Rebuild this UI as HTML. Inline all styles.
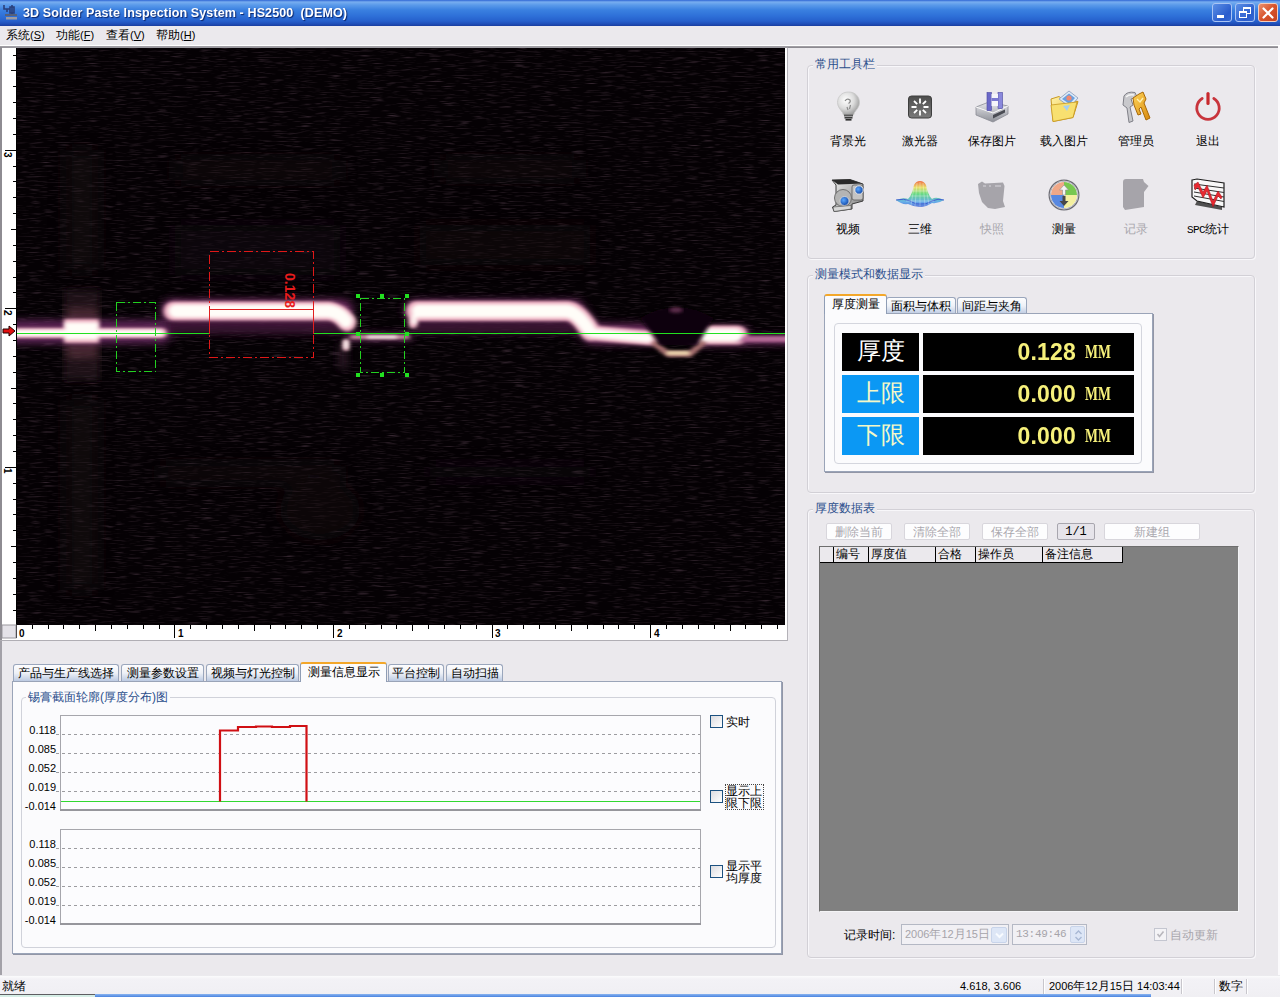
<!DOCTYPE html>
<html>
<head>
<meta charset="utf-8">
<title>3D Solder Paste Inspection System</title>
<style>
*{box-sizing:border-box;margin:0;padding:0}
html,body{width:1280px;height:997px;overflow:hidden}
body{position:relative;background:#ebe9ed;font-family:"Liberation Sans",sans-serif;font-size:12px;color:#000;line-height:1}
.abs{position:absolute}
/* title bar */
#title{left:0;top:0;width:1280px;height:26px;background:linear-gradient(180deg,#2f66d4 0,#78aef0 2px,#5a9aea 5px,#3a80e0 10px,#2e70d8 16px,#2660cc 21px,#1f4eb8 24px,#193d9e 26px)}
#title .txt{left:23px;top:6px;transform:scaleX(0.965);transform-origin:0 0;color:#fff;font-weight:bold;font-size:13px;letter-spacing:0.1px;text-shadow:1px 1px 1px #0a246a;white-space:nowrap}
.tb{top:3px;width:20px;height:19px;border-radius:3px;border:1px solid #a9c4f4;background:linear-gradient(135deg,#5b8fe6,#2a5ccc 70%,#3468d4)}
.tb.close{background:linear-gradient(135deg,#e9916f,#d8532b 50%,#c5421f);border-color:#f4cdbd}
/* menu */
#menu{left:0;top:26px;width:1280px;height:19px;background:#ebe9ed}
#menu span{position:absolute;top:3px;font-size:12px;white-space:nowrap}
#menu span i{font-style:normal;font-size:11px}
/* group box */
.gb{border:1px solid #d2d0d6;border-radius:4px;box-shadow:inset 1px 1px 0 #f8f7fa,1px 1px 0 #f8f7fa}
.gbt{color:#2b4f8c;font-size:12px;background:#ebe9ed;padding:0 2px;white-space:nowrap}
.t12{font-size:12px;white-space:nowrap}
</style>
</head>
<body>
<!-- TITLE BAR -->
<div id="title" class="abs">
  <svg class="abs" style="left:3px;top:4px" width="16" height="17" viewBox="0 0 16 17">
    <path d="M1 1v4h3v3M4 5h3M9 1v9M7 3h4v6h-4z" fill="none" stroke="#2a3f7a" stroke-width="1.6"/>
    <rect x="2" y="10" width="12" height="2" fill="#55607a"/><rect x="3" y="13" width="11" height="2.5" fill="#9a9aa4"/>
  </svg>
  <div class="abs txt">3D Solder Paste Inspection System - HS2500&nbsp; (DEMO)</div>
  <div class="abs tb" style="left:1212px"><div class="abs" style="left:4px;top:11px;width:7px;height:3px;background:#fff"></div></div>
  <div class="abs tb" style="left:1235px">
    <div class="abs" style="left:7px;top:3px;width:8px;height:7px;border:1px solid #fff;border-top-width:2px"></div>
    <div class="abs" style="left:3px;top:7px;width:8px;height:7px;border:1px solid #fff;border-top-width:2px;background:#3a6cd6"></div>
  </div>
  <div class="abs tb close" style="left:1258px">
    <svg class="abs" style="left:3px;top:3px" width="12" height="12" viewBox="0 0 12 12"><path d="M1.5 1.5l9 9M10.5 1.5l-9 9" stroke="#fff" stroke-width="2.2" stroke-linecap="round"/></svg>
  </div>
</div>
<!-- MENU -->
<div id="menu" class="abs">
  <span style="left:6px">系统<i>(<u>S</u>)</i></span>
  <span style="left:56px">功能<i>(<u>F</u>)</i></span>
  <span style="left:106px">查看<i>(<u>V</u>)</i></span>
  <span style="left:156px">帮助<i>(<u>H</u>)</i></span>
</div>
<div class="abs" style="left:0;top:45px;width:1280px;height:1px;background:#fff"></div>
<div class="abs" style="left:0;top:46px;width:1278px;height:1px;background:#a09ea4"></div>
<div class="abs" style="left:788px;top:47px;width:490px;height:1px;background:#8c8a90"></div>
<div class="abs" style="left:1278px;top:46px;width:2px;height:930px;background:#fbfafc"></div>

<div class="abs" style="left:0;top:641px;width:2px;height:334px;background:#a3a1a8"></div>
<!-- CAMERA VIEW -->
<div id="cam" class="abs" style="left:0;top:47px;width:788px;height:594px;background:#fff;border-left:2px solid #9a989e;border-top:1px solid #9a989e"></div>
<svg class="abs" style="left:0;top:47px" width="788" height="594" viewBox="0 47 788 594">
  <defs>
    <filter id="b1" x="-5%" y="-200%" width="110%" height="500%"><feGaussianBlur stdDeviation="2.2 1.6"/></filter>
    <filter id="b2" x="-5%" y="-300%" width="110%" height="700%"><feGaussianBlur stdDeviation="4 3.5"/></filter>
    <filter id="b3" x="-20%" y="-20%" width="140%" height="140%"><feGaussianBlur stdDeviation="9"/></filter>
    <filter id="nz" x="0" y="0" width="100%" height="100%">
      <feTurbulence type="fractalNoise" baseFrequency="0.07 0.8" numOctaves="2" seed="4"/>
      <feColorMatrix type="matrix" values="0 0 0 0 0.11  0 0 0 0 0.06  0 0 0 0 0.09  0.9 0.9 0 0 -0.93"/>
    </filter>
    <clipPath id="cc"><rect x="16" y="48" width="769" height="577"/></clipPath>
  </defs>
  <!-- white ruler backgrounds -->
  <rect x="2" y="48" width="786" height="593" fill="#fff"/>
  <rect x="16" y="48" width="769" height="577" fill="#050104"/>
  <g clip-path="url(#cc)">
    <rect x="16" y="48" width="769" height="577" filter="url(#nz)"/>
    <!-- faint haze -->
    <g filter="url(#b3)" opacity="0.45">
      <rect x="66" y="150" width="32" height="120" fill="#1e1816"/>
      <rect x="66" y="400" width="32" height="190" fill="#1a1412"/>
      <rect x="175" y="160" width="165" height="20" fill="#1c1618"/>
      <rect x="175" y="225" width="165" height="50" fill="#151012"/>
      <rect x="160" y="465" width="180" height="16" fill="#1a1216"/>
      <ellipse cx="320" cy="510" rx="40" ry="30" fill="#120c10"/>
      <rect x="440" y="160" width="140" height="18" fill="#1a1216"/>
      <rect x="420" y="225" width="170" height="40" fill="#120c10"/>
      <rect x="430" y="465" width="160" height="14" fill="#160f14"/>
    </g>
    <!-- vertical streak at x~80 -->
    <g filter="url(#b2)">
      <rect x="64" y="290" width="36" height="90" fill="#3a2028" opacity="0.5"/>
      <rect x="66" y="308" width="32" height="50" fill="#6a3c48" opacity="0.5"/>
    </g>
    <!-- purple outer glow -->
    <g filter="url(#b2)" fill="none" stroke="#6e2a60" stroke-linecap="round" stroke-linejoin="round" opacity="0.9">
      <path d="M10 332H160" stroke-width="24" stroke="#62285a"/>
      <path d="M172 310H342" stroke-width="22"/>
      <path d="M172 328H346" stroke-width="12" stroke="#3e1636"/>
      <path d="M350 337H408" stroke-width="7"/>
      <path d="M415 310H574L592 334H652" stroke-width="21"/>
      <path d="M418 328H580" stroke-width="12" stroke="#3e1636"/>
      <path d="M700 336H740" stroke-width="20"/>
      <path d="M738 340H790" stroke-width="9"/>
      <path d="M343 345v22" stroke-width="5" stroke="#4a2a40"/>
    </g>
    <!-- pink mid glow -->
    <g filter="url(#b1)" fill="none" stroke="#f0b4c4" stroke-linecap="round" stroke-linejoin="round">
      <path d="M10 333H162" stroke-width="10"/>
      <path d="M64 331H99" stroke-width="24" stroke-linecap="butt"/>
      <path d="M173 311H330Q340 313 347 322" stroke-width="19"/>
      <path d="M352 337H408" stroke-width="4" stroke="#c890a0"/>
      <path d="M346 342v6" stroke-width="6"/>
      <path d="M416 311H568Q578 312 590 331" stroke-width="20"/>
      <path d="M413 316v8" stroke-width="9"/>
      <path d="M592 333L652 338" stroke-width="15"/>
      <path d="M702 335H738" stroke-width="19"/>
      <path d="M738 339H790" stroke-width="6" stroke="#b86a98"/>
      <path d="M654 343L668 354H690L704 342" stroke-width="6" stroke="#a87070"/>
    </g>
    <!-- white core -->
    <g filter="url(#b1)" fill="none" stroke="#fffdf8" stroke-linecap="round" stroke-linejoin="round">
      <path d="M10 333H160" stroke-width="6"/>
      <path d="M65 331H98" stroke-width="17" stroke-linecap="butt"/>
      <path d="M175 311H329Q339 312 346 321" stroke-width="13"/>
      <path d="M368 337H396" stroke-width="2.500"/>
      <path d="M346 342v5" stroke-width="4"/>
      <path d="M418 311H567Q577 312 589 330" stroke-width="13"/>
      <path d="M414 316v6" stroke-width="5"/>
      <path d="M592 333L648 338" stroke-width="9"/>
      <path d="M706 335H736" stroke-width="13"/>
      <path d="M668 353H688" stroke-width="4" stroke="#f0dcb0"/>
    </g>
    <!-- dark V dip -->
    <path d="M640 318Q676 296 714 318L697 345H660Z" fill="#0a0408" filter="url(#b1)"/>
    <ellipse cx="676" cy="310" rx="7" ry="3" fill="#5a2a48" filter="url(#b1)"/>
  </g>
  <!-- overlays -->
  <g fill="none" shape-rendering="crispEdges">
    <path d="M16 333.500H209M313 333.500H785" stroke="#22e020" stroke-width="1.4"/>
    <rect x="116.500" y="302.500" width="39" height="69" stroke="#22d020" stroke-width="1" stroke-dasharray="8 3 2 3"/>
    <rect x="360.500" y="298.500" width="44" height="74" stroke="#22d020" stroke-width="1" stroke-dasharray="8 3 2 3"/>
    <rect x="209.500" y="251.500" width="104" height="106" stroke="#e01818" stroke-width="1" stroke-dasharray="9 3 2 3"/>
    <path d="M209.500 309.500H313.500M209.500 309V334M313.500 309V334" stroke="#e02020" stroke-width="1"/>
  </g>
  <g fill="#22e020">
    <rect x="356" y="294" width="4" height="4"/><rect x="380" y="294" width="4" height="4"/><rect x="405" y="294" width="4" height="4"/>
    <rect x="356" y="332" width="4" height="4"/><rect x="405" y="332" width="4" height="4"/>
    <rect x="356" y="373" width="4" height="4"/><rect x="380" y="373" width="4" height="4"/><rect x="405" y="373" width="4" height="4"/>
  </g>
  <text transform="translate(284.500 273) rotate(90)" font-family="Liberation Sans, sans-serif" font-weight="bold" font-size="14" fill="#e81c1c">0.128</text>
  <!-- rulers -->
  <g stroke="#000" stroke-width="1" shape-rendering="crispEdges">
    <path id="vt" d="M13 610.5H16M13 594.5H16M13 578.5H16M13 562.5H16M11 546.5H16M13 530.5H16M13 514.5H16M13 499.5H16M13 483.5H16M5 467.5H16M13 451.5H16M13 435.5H16M13 419.5H16M13 403.5H16M11 388.5H16M13 372.5H16M13 356.5H16M13 340.5H16M13 324.5H16M5 308.5H16M13 292.5H16M13 277.5H16M13 261.5H16M13 245.5H16M11 229.5H16M13 213.5H16M13 197.5H16M13 181.5H16M13 166.5H16M5 150.5H16M13 134.5H16M13 118.5H16M13 102.5H16M13 86.5H16M11 70.5H16M13 55.5H16M16.500 48V625"/>
    <path id="ht" d="M16.5 624.500v13M32.5 624.500v4M48.5 624.500v4M63.5 624.500v4M79.5 624.500v4M95.5 624.500v6M111.5 624.500v4M127.5 624.500v4M143.5 624.500v4M159.5 624.500v4M174.5 624.500v13M190.5 624.500v4M206.5 624.500v4M222.5 624.500v4M238.5 624.500v4M254.5 624.500v6M270.5 624.500v4M285.5 624.500v4M301.5 624.500v4M317.5 624.500v4M333.5 624.500v13M349.5 624.500v4M365.5 624.500v4M381.5 624.500v4M396.5 624.500v4M412.5 624.500v6M428.5 624.500v4M444.5 624.500v4M460.5 624.500v4M476.5 624.500v4M492.5 624.500v13M507.5 624.500v4M523.5 624.500v4M539.5 624.500v4M555.5 624.500v4M571.5 624.500v6M587.5 624.500v4M603.5 624.500v4M618.5 624.500v4M634.5 624.500v4M650.5 624.500v13M666.5 624.500v4M682.5 624.500v4M698.5 624.500v4M714.5 624.500v4M730.5 624.500v6M745.5 624.500v4M761.5 624.500v4M777.5 624.500v4"/>
  </g>
  <g font-family="Liberation Sans, sans-serif" font-size="10" font-weight="bold" fill="#000">
    <text x="19" y="637">0</text><text x="178" y="637">1</text><text x="337" y="637">2</text><text x="495" y="637">3</text><text x="654" y="637">4</text>
    <text transform="translate(4 152) rotate(90)">3</text>
    <text transform="translate(4 310) rotate(90)">2</text>
    <text transform="translate(4 468) rotate(90)">1</text>
  </g>
  <path d="M3 329h6v-3l6 5l-6 5v-3h-6z" fill="#e01010" stroke="#200" stroke-width="1"/>
  <!-- corner box -->
  <rect x="2" y="625" width="14" height="13" fill="#e4e2e8" stroke="#9a989e" stroke-width="1"/>
  <!-- frame -->
  <path d="M0 47.500H788" stroke="#9a989e" stroke-width="1"/>
  <path d="M1 47V641" stroke="#8e8c92" stroke-width="2"/>
  <path d="M0 640.500H788" stroke="#b0aeb4" stroke-width="1"/>
  <path d="M787.500 48V641" stroke="#b4b2b8" stroke-width="1"/>
</svg>


<style>
.ico{position:absolute;width:36px;height:36px}
.il{position:absolute;font-size:12px;white-space:nowrap;text-align:center;width:72px}
.dis{color:#a8a6ac}
.tab{position:absolute;height:17px;border:1px solid #9aa6bc;border-bottom:none;border-radius:3px 3px 0 0;background:linear-gradient(180deg,#fdfdfe 0,#eef1f7 50%,#bccae2 100%);font-size:12px;white-space:nowrap;text-align:center;padding-top:2px}
.tab.act{background:#fbfbfd;border-color:#8f9db5;border-top:2px solid #f3a72a;z-index:3;padding-top:2px}
.pane{position:absolute;background:#fbfbfd;border:1px solid #9aa4b8;box-shadow:1px 1px 0 #9296a6}
.lcd{position:absolute;background:#000;height:38px}
.lcdl{position:absolute;height:38px;color:#fff;font-family:"Liberation Serif",serif;font-size:24px;text-align:center;line-height:37px;width:77px}
.num{position:absolute;right:58px;top:8px;font-size:23px;transform:scaleY(1.04);font-weight:bold;color:#f6f07a;letter-spacing:0.2px}
.mm{position:absolute;left:162px;top:9px;font-family:"Liberation Serif",serif;font-weight:bold;font-size:19px;color:#f6f07a;transform:scaleX(0.72);transform-origin:0 0}
.btn{position:absolute;top:523px;height:17px;background:#fdfdfe;border:1px solid #d8d6dc;border-radius:2px;color:#aaa8ae;font-size:12px;text-align:center;padding-top:2px;white-space:nowrap}
.hc{position:absolute;top:547px;height:16px;background:#ebe9ed;border-right:1px solid #000;border-bottom:1px solid #000;font-size:12px;white-space:nowrap;padding:1px 0 0 2px;overflow:hidden}
</style>
<!-- GROUP 1: toolbar -->
<div class="abs gb" style="left:807px;top:65px;width:448px;height:194px"></div>
<div class="abs gbt" style="left:813px;top:58px">常用工具栏</div>
<!-- GROUP 2 -->
<div class="abs gb" style="left:807px;top:275px;width:448px;height:218px"></div>
<div class="abs gbt" style="left:813px;top:268px">测量模式和数据显示</div>
<div class="tab act" style="left:824px;top:294px;width:63px;height:20px">厚度测量</div>
<div class="tab" style="left:886px;top:297px;width:70px">面积与体积</div>
<div class="tab" style="left:957px;top:297px;width:70px">间距与夹角</div>
<div class="pane" style="left:824px;top:313px;width:329px;height:159px"></div>
<div class="abs" style="left:834px;top:323px;width:308px;height:141px;border:1px solid #d4d6de;border-radius:4px;z-index:4"></div>
<div style="position:absolute;left:0;top:0;z-index:5">
<div class="lcdl" style="left:842px;top:333px;background:#000">厚度</div>
<div class="lcdl" style="left:842px;top:375px;background:#0b98f4;color:#f4f8c8">上限</div>
<div class="lcdl" style="left:842px;top:417px;background:#0b98f4;color:#f4f8c8">下限</div>
<div class="lcd" style="left:923px;top:333px;width:211px"><span class="num">0.128</span><span class="mm">MM</span></div>
<div class="lcd" style="left:923px;top:375px;width:211px"><span class="num">0.000</span><span class="mm">MM</span></div>
<div class="lcd" style="left:923px;top:417px;width:211px"><span class="num">0.000</span><span class="mm">MM</span></div>
</div>
<!-- GROUP 3 -->
<div class="abs gb" style="left:807px;top:509px;width:448px;height:449px"></div>
<div class="abs gbt" style="left:813px;top:502px">厚度数据表</div>
<div class="btn" style="left:826px;width:66px">删除当前</div>
<div class="btn" style="left:904px;width:66px">清除全部</div>
<div class="btn" style="left:982px;width:66px">保存全部</div>
<div class="btn" style="left:1057px;width:38px;background:#e6e4ea;border-color:#a8a6ae;color:#000;font-family:'Liberation Mono',monospace">1/1</div>
<div class="btn" style="left:1104px;width:96px">新建组</div>
<div class="abs" style="left:819px;top:546px;width:420px;height:366px;background:#808080;border-top:1px solid #6e6e6e;border-left:1px solid #6e6e6e;border-right:1px solid #f4f4f6;border-bottom:1px solid #f4f4f6"></div>
<div class="hc" style="left:820px;width:14px"></div>
<div class="hc" style="left:834px;width:35px">编号</div>
<div class="hc" style="left:869px;width:67px">厚度值</div>
<div class="hc" style="left:936px;width:40px">合格</div>
<div class="hc" style="left:976px;width:67px">操作员</div>
<div class="hc" style="left:1043px;width:80px">备注信息</div>
<!-- date row -->
<div class="abs t12" style="left:844px;top:929px">记录时间:</div>
<div class="abs" style="left:901px;top:924px;width:108px;height:21px;background:#f1f0f4;border:1px solid #b4b8c4"><span class="abs t12" style="left:3px;top:3px;color:#a6a4aa"><i style="font-style:normal;font-size:11px">2006</i>年<i style="font-style:normal;font-size:11px">12</i>月<i style="font-style:normal;font-size:11px">15</i>日</span>
  <div class="abs" style="left:89px;top:2px;width:16px;height:16px;border-radius:2px;background:#dde6f6;border:1px solid #c8d4ea"><svg class="abs" style="left:3px;top:4px" width="9" height="7"><path d="M1 1.500l3.500 3.500l3.500-3.500" fill="none" stroke="#f8fbff" stroke-width="2"/></svg></div></div>
<div class="abs" style="left:1012px;top:924px;width:75px;height:21px;background:#f1f0f4;border:1px solid #b4b8c4"><span class="abs" style="left:3px;top:4px;color:#a6a4aa;font-family:'Liberation Mono',monospace;font-size:11px;letter-spacing:-0.3px;white-space:nowrap">13:49:46</span>
  <div class="abs" style="left:57px;top:1px;width:15px;height:17px;border-radius:2px;background:#dde6f6;border:1px solid #c8d4ea"><svg class="abs" style="left:3px;top:2px" width="9" height="13"><path d="M1.500 5l3-3l3 3M1.500 8l3 3l3-3" fill="none" stroke="#a8b8d4" stroke-width="1.4"/></svg></div></div>
<div class="abs" style="left:1154px;top:928px;width:13px;height:13px;background:#f4f3f6;border:1px solid #c4c6d0"><svg class="abs" style="left:1px;top:1px" width="9" height="9"><path d="M1.500 4l2 2.500l4-5" fill="none" stroke="#b8b6bc" stroke-width="1.6"/></svg></div>
<div class="abs t12 dis" style="left:1170px;top:929px">自动更新</div>

<svg width="0" height="0" style="position:absolute"><defs>
<radialGradient id="gBulb" cx="0.38" cy="0.35" r="0.75"><stop offset="0" stop-color="#ffffff"/><stop offset="0.5" stop-color="#dcdcdc"/><stop offset="1" stop-color="#8c8c8c"/></radialGradient>
<linearGradient id="gLas" x1="0" y1="0" x2="0" y2="1"><stop offset="0" stop-color="#4c4c4c"/><stop offset="1" stop-color="#7a7a7a"/></linearGradient>
<linearGradient id="gFold" x1="0" y1="0" x2="1" y2="1"><stop offset="0" stop-color="#fff3a8"/><stop offset="1" stop-color="#e8b838"/></linearGradient>
<linearGradient id="gDrv" x1="0" y1="0" x2="0" y2="1"><stop offset="0" stop-color="#e8e8ec"/><stop offset="1" stop-color="#8e9098"/></linearGradient>
<linearGradient id="gKey" x1="0" y1="0" x2="1" y2="1"><stop offset="0" stop-color="#ffd458"/><stop offset="1" stop-color="#d88a10"/></linearGradient>
<linearGradient id="gCam" x1="0" y1="0" x2="1" y2="1"><stop offset="0" stop-color="#f0f0f0"/><stop offset="1" stop-color="#7c7c7c"/></linearGradient>
<radialGradient id="gLens" cx="0.4" cy="0.4" r="0.7"><stop offset="0" stop-color="#5aa8ff"/><stop offset="1" stop-color="#0a3c9c"/></radialGradient>
<linearGradient id="g3d" x1="0" y1="0" x2="0" y2="1"><stop offset="0" stop-color="#f06030"/><stop offset="0.25" stop-color="#e8e060"/><stop offset="0.5" stop-color="#58d878"/><stop offset="0.8" stop-color="#58a8e8"/><stop offset="1" stop-color="#4868d8"/></linearGradient>
</defs></svg>
<!-- 1 bulb -->
<svg class="ico" style="left:830px;top:88px" viewBox="0 0 36 36">
  <path d="M18.500 4C11.500 4 7.500 9 7.500 14.500C7.500 19 10.500 21.500 12.500 24.500L13.500 27H23.500L24.500 24.500C26.500 21.500 29.500 19 29.500 14.500C29.500 9 25.500 4 18.500 4Z" fill="url(#gBulb)" stroke="#c8c8c8" stroke-width="0.8"/>
  <path d="M15 13q2-3 5-1q1 2-1.500 3.500M17 19l1 3M20.500 17l-1 4" fill="none" stroke="#8a8a8a" stroke-width="1.2"/>
  <rect x="14" y="26.500" width="9" height="2" fill="#5a5a5a"/><rect x="14.500" y="29" width="8" height="1.600" fill="#3c3c3c"/><rect x="15.500" y="31" width="6" height="1.600" fill="#2c2c2c"/>
</svg>
<!-- 2 laser -->
<svg class="ico" style="left:901px;top:88px" viewBox="0 0 36 36">
  <rect x="7.500" y="8" width="23" height="22" rx="3" fill="url(#gLas)" stroke="#3e3e3e" stroke-width="1"/>
  <g stroke="#fff" stroke-width="1.800" stroke-linecap="butt"><path d="M19 10.500v5M19 22.500v5M10.500 19h5M22.500 19h5M13 13l3.200 3.200M25 13l-3.200 3.200M13 25l3.200-3.200M25 25l-3.200-3.200"/></g>
</svg>
<!-- 3 save -->
<svg class="ico" style="left:973px;top:88px" viewBox="0 0 36 36">
  <path d="M3 19L16 14L35 18V26L20 34L3 27Z" fill="url(#gDrv)" stroke="#8a8c94" stroke-width="0.8"/>
  <path d="M3 19L20 25L35 18" fill="none" stroke="#fafafa" stroke-width="1"/>
  <path d="M20 27l12-5.500v3L20 30.500Z" fill="#4a4c54"/>
  <rect x="14" y="4.500" width="4.500" height="18" fill="#6a68c8" stroke="#4a48a0" stroke-width="0.6"/>
  <rect x="25" y="4.500" width="4.500" height="16" fill="#8a88dc" stroke="#4a48a0" stroke-width="0.6"/>
  <rect x="18.500" y="6" width="6.500" height="12" fill="#f4f4fa"/>
  <rect x="18.500" y="10" width="6.500" height="3" fill="#7a78d0"/>
</svg>
<!-- 4 folder -->
<svg class="ico" style="left:1045px;top:88px" viewBox="0 0 36 36">
  <path d="M6 11L14 8.500L17 11L33 13.500L28 29.500L8 33.500Z" fill="url(#gFold)" stroke="#c89820" stroke-width="1"/>
  <path d="M14 11L24 3L33 10L25 19Z" fill="#dceaf8" stroke="#8898b8" stroke-width="0.8"/>
  <path d="M17 11L24 5.500L30 10L24.500 16Z" fill="#6aa0e0"/>
  <circle cx="24" cy="10" r="2.600" fill="#f08870"/>
  <path d="M6 17L32 14L28 29.500L8 33.500Z" fill="#f8e070" stroke="#c89820" stroke-width="0.8"/>
  <path d="M18 18l7-1l-3 6z" fill="#a8d0f0"/>
</svg>
<!-- 5 keys -->
<svg class="ico" style="left:1117px;top:88px" viewBox="0 0 36 36">
  <path d="M7 8Q10 3 18 4.500L20 9L14 11L16 17L13 19L16 33L12 34.500L10 20L6 17Z" fill="#c8c8cc" stroke="#808088" stroke-width="1"/>
  <path d="M9 9Q12 6 17 7" fill="none" stroke="#f4f4f4" stroke-width="1.5"/>
  <path d="M16 10L22 6L26 4L29 11L27 15L33 30L29 32L24 19L22 21L24 26L21 27L17 17Z" fill="url(#gKey)" stroke="#a86808" stroke-width="1"/>
  <path d="M20 11l3 3l3-4" fill="none" stroke="#fff0b0" stroke-width="1.400"/>
</svg>
<!-- 6 power -->
<svg class="ico" style="left:1189px;top:88px" viewBox="0 0 36 36">
  <path d="M13.200 10.500A11.200 11.200 0 1 0 24.800 10.500" fill="none" stroke="#c8343c" stroke-width="2.800" stroke-linecap="round"/>
  <path d="M19 5.500V15.500" stroke="#c8282c" stroke-width="3.200" stroke-linecap="round"/>
</svg>
<!-- 7 video -->
<svg class="ico" style="left:830px;top:177px" viewBox="0 0 36 36">
  <path d="M2 3L20 2.500L33 7V24L22 27V32L4 34.500L2.500 30L6 28V8Z" fill="url(#gCam)" stroke="#3c3c3c" stroke-width="1"/>
  <path d="M2 3L20 2.500L32 6.500L8 7.500Z" fill="#2a2a2a"/>
  <rect x="22" y="8" width="11" height="15" rx="2" fill="#c4c4c4" stroke="#5a5a5a" stroke-width="0.8"/>
  <circle cx="29" cy="13" r="4.200" fill="url(#gLens)" stroke="#e8e8e8" stroke-width="1"/>
  <circle cx="13" cy="21" r="8.500" fill="#b4b4b4" stroke="#707070" stroke-width="1"/>
  <circle cx="14.500" cy="24" r="4.500" fill="url(#gLens)" stroke="#e0e0e0" stroke-width="0.8"/>
  <path d="M3 30L21 28.500V32L4 34.500Z" fill="#d8d8d8" stroke="#505050" stroke-width="0.6"/>
</svg>
<!-- 8 3D -->
<svg class="abs" style="left:892px;top:177px" width="56" height="36" viewBox="0 0 56 36">
  <path d="M4 23Q12 20 16 22Q20 18 22 8Q24 4 28 4Q32 4 34 8Q36 18 40 22Q44 19 52 23Q46 27 40 26Q34 30 28 30Q22 30 16 27Q10 28 4 23Z" fill="url(#g3d)" opacity="0.9"/>
  <path d="M4 23Q12 21 18 24Q24 28 28 27Q34 28 40 24Q46 21 52 23" fill="none" stroke="#4060d0" stroke-width="1"/>
  <g stroke="#ffffff" stroke-width="0.5" opacity="0.6"><path d="M22 10l-3 18M25 6l-2 23M28 5v25M31 6l2 23M34 10l3 18M20 14h16M18 19h20M14 24h28"/></g>
</svg>
<!-- 9 snapshot (disabled) -->
<svg class="ico" style="left:973px;top:177px" viewBox="0 0 36 36">
  <path d="M5 7L9 4.500L12 6.500L30 5.500L31.500 9L30 24L32 30L22 32L15 31L9 25L6 16Z" fill="#a6a4aa"/>
  <path d="M10 9h3M16 9h2M22 9h6" stroke="#d8d6dc" stroke-width="1.200"/>
</svg>
<!-- 10 measure -->
<svg class="ico" style="left:1045px;top:177px" viewBox="0 0 36 36">
  <circle cx="19" cy="18" r="14.500" fill="#f4f4f4" stroke="#6c6c74" stroke-width="2"/>
  <path d="M19 18V5A13 13 0 0 0 6 18Z" fill="#f0a888"/>
  <path d="M19 18H32A13 13 0 0 0 19 5Z" fill="#78c850"/>
  <path d="M19 18V31A13 13 0 0 0 32 18Z" fill="#f4f0a0"/>
  <path d="M19 18H6A13 13 0 0 0 19 31Z" fill="#5888e0"/>
  <circle cx="19" cy="18" r="14" fill="none" stroke="#c8c8d0" stroke-width="1"/>
  <path d="M19 8l-4.500 5h3v5h3v-5h3z" fill="#f4f4f4" stroke="#909090" stroke-width="0.6"/>
  <path d="M19 29l-4.500-5h3v-5h3v5h3z" fill="#484848"/>
</svg>
<!-- 11 record (disabled) -->
<svg class="ico" style="left:1117px;top:177px" viewBox="0 0 36 36">
  <path d="M6 5Q6 2 9 2H26L27 5L31.500 9L27 15V30L8 33L6 30Z" fill="#a6a4aa"/>
</svg>
<!-- 12 SPC -->
<svg class="ico" style="left:1189px;top:177px" viewBox="0 0 36 36">
  <path d="M6 28L33 33V30L8 24Z" fill="#505050"/>
  <path d="M3 3L8 2L35 6V30L8 24L3 20Z" fill="#f8f8f8" stroke="#202020" stroke-width="1.200"/>
  <g stroke="#303030" stroke-width="1"><path d="M5 7L35 11M5 11L35 15.500M5 15L35 20M5 19L35 24.500"/></g>
  <path d="M5 8L9 5L14 15L18 8L24 24L29 14L33 20L32 22L29 19L24 30L18 14L14 21L9 10L6 13Z" fill="#e82830" stroke="#a01018" stroke-width="0.5"/>
</svg>
<!-- labels -->
<div class="il" style="left:812px;top:135px">背景光</div>
<div class="il" style="left:884px;top:135px">激光器</div>
<div class="il" style="left:956px;top:135px">保存图片</div>
<div class="il" style="left:1028px;top:135px">载入图片</div>
<div class="il" style="left:1100px;top:135px">管理员</div>
<div class="il" style="left:1172px;top:135px">退出</div>
<div class="il" style="left:812px;top:223px">视频</div>
<div class="il" style="left:884px;top:223px">三维</div>
<div class="il dis" style="left:956px;top:223px">快照</div>
<div class="il" style="left:1028px;top:223px">测量</div>
<div class="il dis" style="left:1100px;top:223px">记录</div>
<div class="il" style="left:1172px;top:223px"><span style="font-family:'Liberation Mono',monospace;font-size:11px;letter-spacing:-0.6px">SPC</span>统计</div>


<style>
.cb{position:absolute;width:13px;height:13px;background:linear-gradient(135deg,#dcdce0,#fff);border:1px solid #1c5180}
.yl{position:absolute;left:18px;width:38px;text-align:right;font-size:11px;white-space:nowrap;padding-top:1px}
.sbs{position:absolute;top:979px;width:1px;height:15px;background:#c8c6cc;border-right:1px solid #fff;box-sizing:content-box}
</style>
<!-- BOTTOM TABS -->
<div class="tab" style="left:13px;top:664px;width:106px">产品与生产线选择</div>
<div class="tab" style="left:121px;top:664px;width:83px">测量参数设置</div>
<div class="tab" style="left:206px;top:664px;width:93px">视频与灯光控制</div>
<div class="tab act" style="left:300px;top:662px;width:87px;height:20px">测量信息显示</div>
<div class="tab" style="left:388px;top:664px;width:56px">平台控制</div>
<div class="tab" style="left:446px;top:664px;width:57px">自动扫描</div>
<div class="pane" style="left:12px;top:681px;width:770px;height:273px"></div>
<div class="abs" style="left:21px;top:697px;width:755px;height:251px;border:1px solid #d0d2da;border-radius:4px;z-index:4"></div>
<div class="abs t12" style="left:26px;top:691px;z-index:5;background:#fbfbfd;padding:0 2px;color:#2b4f8c">锡膏截面轮廓(厚度分布)图</div>
<svg class="abs" style="left:0;top:700px;z-index:5" width="790" height="240" viewBox="0 700 790 240">
  <g shape-rendering="crispEdges">
  <rect x="60.500" y="715.500" width="640" height="94" fill="#fcfcfe" stroke="#a6a6ac"/>
  <path d="M60 810H701" stroke="#96969c" stroke-width="2"/>
  <rect x="60.500" y="829.500" width="640" height="94" fill="#fcfcfe" stroke="#a6a6ac"/>
  <path d="M60 924H701" stroke="#96969c" stroke-width="2"/>
  <g stroke="#9c9ca0" stroke-width="1" stroke-dasharray="3 3">
    <path d="M56 734.500H700M56 753.500H700M56 772.500H700M56 791.500H700"/>
    <path d="M56 848.500H700M56 867.500H700M56 886.500H700M56 905.500H700"/>
  </g>
  <path d="M61 801.500H700" stroke="#30d830" stroke-width="1.400"/>
  </g>
  <path d="M220 801.500V730.500H238V727H256V726.500H272V727H290V726H306.500V801.500" fill="none" stroke="#d01014" stroke-width="2.200" stroke-linejoin="miter"/>
</svg>
<div style="position:absolute;left:0;top:0;z-index:6">
<div class="yl" style="top:724px">0.118</div><div class="yl" style="top:743px">0.085</div><div class="yl" style="top:762px">0.052</div><div class="yl" style="top:781px">0.019</div><div class="yl" style="top:800px">-0.014</div>
<div class="yl" style="top:838px">0.118</div><div class="yl" style="top:857px">0.085</div><div class="yl" style="top:876px">0.052</div><div class="yl" style="top:895px">0.019</div><div class="yl" style="top:914px">-0.014</div>
<div class="cb" style="left:710px;top:715px"></div><div class="abs t12" style="left:726px;top:716px">实时</div>
<div class="cb" style="left:710px;top:790px"></div><div class="abs t12" style="left:726px;top:785px;line-height:12px;outline:1px dotted #444;width:37px;white-space:normal">显示上限下限</div>
<div class="cb" style="left:710px;top:865px"></div><div class="abs t12" style="left:726px;top:860px;line-height:12px;width:38px;white-space:normal">显示平均厚度</div>
</div>


<!-- STATUS BAR -->
<div class="abs" style="left:0;top:975px;width:1280px;height:22px;background:linear-gradient(180deg,#dcdae0 0,#fbfbfc 1px,#f3f2f6 4px,#f0eff3 100%)"></div>
<div class="abs t12" style="left:2px;top:980px">就绪</div>
<div class="abs" style="left:960px;top:981px;font-size:11px;white-space:nowrap">4.618, 3.606</div>
<div class="sbs" style="left:1043px"></div>
<div class="abs" style="left:1049px;top:980px;font-size:11px;white-space:nowrap">2006<span style="font-size:12px">年</span>12<span style="font-size:12px">月</span>15<span style="font-size:12px">日</span> 14:03:44</div>
<div class="sbs" style="left:1181px"></div>
<div class="sbs" style="left:1214px"></div>
<div class="abs t12" style="left:1219px;top:980px">数字</div>
<div class="sbs" style="left:1246px"></div>
<div class="abs" style="left:95px;top:994px;width:1056px;height:3px;background:linear-gradient(180deg,#8ab4f0,#4a84e0)"></div>
<div class="abs" style="left:0;top:994px;width:95px;height:1px;background:#5e5e62"></div>
<div class="abs" style="left:0;top:995px;width:95px;height:2px;background:#d6eee6"></div>

</body>
</html>
